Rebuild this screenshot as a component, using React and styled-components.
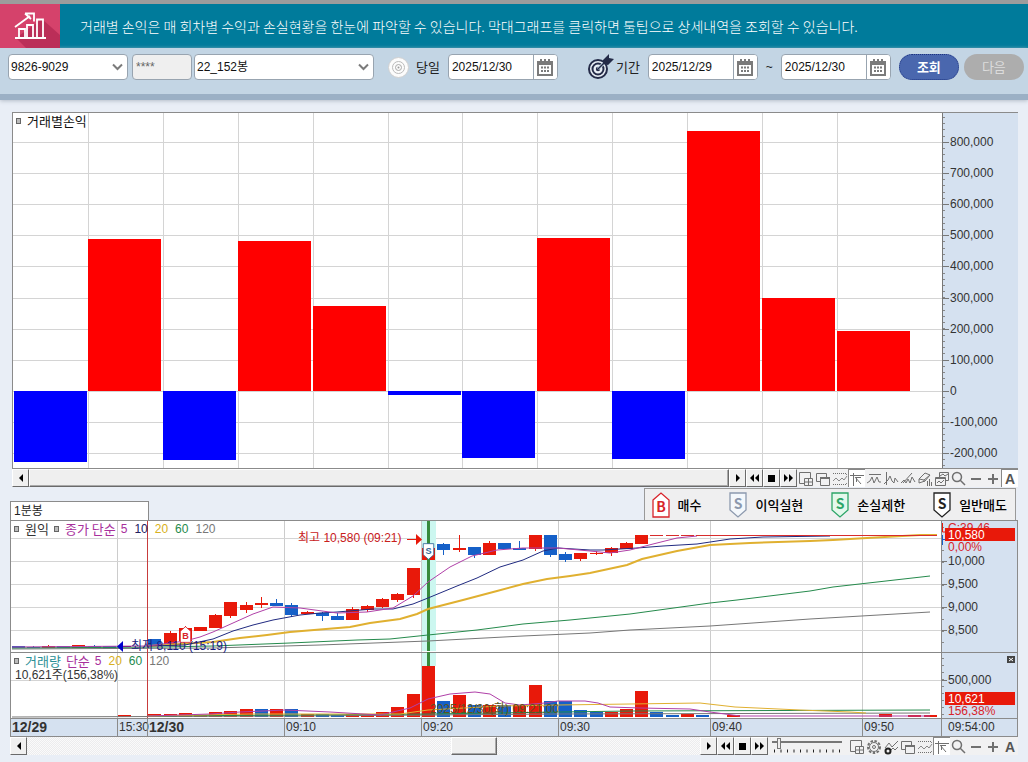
import styled, { createGlobalStyle, css } from "styled-components";

const GlobalStyle = createGlobalStyle`
  * {
    box-sizing: border-box;
  }

  body {
    margin: 0;
    background: #e9eef6;
    color: #222;
    font-family: "Liberation Sans", "Noto Sans CJK KR", sans-serif;
    font-size: 12px;
    line-height: 16px;
  }

  button,
  input,
  select {
    font: inherit;
    color: inherit;
  }
`;

const RED = "#e8190a";
const BLUE = "#1560c8";

/* ---------- header ---------- */

const Header = styled.header`
  display: flex;
  align-items: center;
  height: 48px;
  border-top: 4px solid #9c9c9c;
  background: #007b9b;
`;

const HeaderLogo = styled.svg`
  flex: none;
  width: 60px;
  height: 44px;
`;

const HeaderText = styled.p`
  margin: 0 0 0 20px;
  color: #fff;
  font-family: "Noto Sans CJK KR", sans-serif;
  font-size: 14px;
  font-weight: 300;
  white-space: nowrap;
`;

/* ---------- search bar ---------- */

const SearchBar = styled.form`
  display: flex;
  align-items: center;
  height: 52px;
  padding: 0 4px 8px 8px;
  border-bottom: 6px solid #9bb0c5;
  background: #c3d5e4;
  box-shadow: 0 1px 4px #b4bcc8;
`;

const Field = styled.div`
  position: relative;
  display: flex;
  flex: none;
  width: ${(props) => props.$width}px;
  height: 26px;
  margin-right: ${(props) => props.$gap || 0}px;
  overflow: hidden;
  border: 1px solid #98a4b0;
  border-radius: 4px;
  background: ${(props) => (props.$disabled ? "#efefef" : "#fff")};
`;

const FieldInput = styled.input`
  flex: 1;
  min-width: 0;
  padding: 0 3px;
  border: 0;
  outline: 0;
  background: transparent;
  color: ${(props) => (props.disabled ? "#666" : "#111")};
`;

const FieldSelect = styled.select`
  width: 100%;
  padding: 0 20px 0 2px;
  border: 0;
  outline: 0;
  appearance: none;
  background: transparent;
  color: #111;
`;

const Chevron = styled.svg`
  position: absolute;
  top: 8px;
  right: 4px;
  width: 11px;
  height: 8px;
  pointer-events: none;
`;

const CalendarButton = styled.button`
  display: flex;
  align-items: center;
  justify-content: center;
  width: 24px;
  padding: 0;
  border: 0;
  border-left: 1px solid #98a4b0;
  background: #fff;
`;

const PeriodOption = styled.label`
  display: flex;
  flex: none;
  align-items: center;
  gap: ${(props) => props.$gap}px;
  margin-right: 8px;
  margin-left: ${(props) => props.$left}px;
  font-family: "Noto Sans CJK KR", sans-serif;
  font-size: 13px;

  input {
    position: absolute;
    opacity: 0;
  }
`;

const Tilde = styled.span`
  flex: 1;
  min-width: 22px;
  max-width: 23px;
  text-align: center;
`;

const PillButton = styled.button`
  flex: none;
  width: 60px;
  height: 26px;
  margin-left: ${(props) => props.$left}px;
  padding: 0 0 1px;
  border: ${(props) => (props.disabled ? "0" : "1px dotted #1e3480")};
  border-radius: 13px;
  background: ${(props) => (props.disabled ? "#adadad" : "#4a67ae")};
  color: ${(props) => (props.disabled ? "#dcdcdc" : "#fff")};
  font-family: "Noto Sans CJK KR", sans-serif;
  font-size: 13px;
  font-weight: ${(props) => (props.disabled ? 400 : 700)};
`;

/* ---------- charts ---------- */

const Content = styled.main`
  padding: 12px 10px 8px;
`;

const ProfitPanel = styled.section`
  margin-left: 2px;
`;

const ProfitChart = styled.div`
  display: flex;
  height: 357px;
  border: 1px solid #8b8b8b;
  border-right: 0;
  background: #fff;
`;

const Plot = styled.div`
  position: relative;
  flex: 1;
  min-width: 0;
`;

const PlotDrawing = styled.svg`
  display: block;
  width: 100%;
  height: 100%;
`;

const Axis = styled.svg`
  display: block;
  flex: none;
  width: 76px;
  height: 100%;
  background: #d5e1f0;
  font-size: 12px;
`;

const Legend = styled.div`
  position: absolute;
  top: ${(props) => props.$top}px;
  left: 3px;
  display: flex;
  align-items: center;
  white-space: nowrap;
`;

const Square = styled.i`
  width: 5px;
  height: 6px;
  margin-right: 6px;
  border: 1px solid #666;
  background: #bbb;
`;

const LegendName = styled.span`
  margin-right: 5px;
  color: ${(props) => props.$color};
  font-family: "Noto Sans CJK KR", sans-serif;
  font-size: 13px;
`;

const LegendNumber = styled.span`
  margin-right: 7px;
  color: ${(props) => props.$color};
`;

const Note = styled.span`
  position: absolute;
  top: ${(props) => props.$top}px;
  left: ${(props) => props.$left}%;
  color: ${(props) => props.$color};
  white-space: nowrap;
`;

const PlotMark = styled.svg`
  position: absolute;
  top: ${(props) => props.$top}px;
  left: ${(props) => props.$left}%;
  overflow: visible;
`;

const MiddleRow = styled.div`
  display: flex;
  align-items: flex-end;
  justify-content: space-between;
  height: 33px;
  padding-right: 2px;
`;

const ChartTab = styled.div`
  width: 139px;
  height: 19px;
  padding: 1px 3px;
  border: 1px solid #8b8b8b;
  border-bottom: 0;
  background: #fff;
`;

const MarkLegend = styled.ul`
  display: flex;
  align-items: center;
  gap: 28px;
  height: 32px;
  margin: 0;
  padding: 0 8px 0 7px;
  border: 1px solid #999;
  border-bottom: 0;
  background: #efeff0;
  list-style: none;
`;

const MarkLegendItem = styled.li`
  display: flex;
  align-items: center;
  gap: 8px;
  color: #000;
  font-family: "Noto Sans CJK KR", sans-serif;
  font-size: 13px;
  font-weight: 500;
`;

const StockChart = styled.section`
  border: 1px solid #8b8b8b;
  background: #fff;
`;

const StockBody = styled.div`
  display: flex;
  height: 197px;
`;

const TimeAxis = styled.div`
  display: grid;
  grid-template-columns: 106fr 30fr 137fr 137fr 137fr 152fr 152fr 79fr 76px;
  height: 18px;
  border-top: 1px solid #8b8b8b;
  background: #d5e1f0;
  color: #333;
`;

const TimeCell = styled.span`
  min-width: 0;
  padding-left: ${(props) => (props.$last ? 6 : 1)}px;
  border-left: ${(props) => (props.$first ? "0" : "1px solid #8b8b8b")};
  white-space: nowrap;

  ${(props) =>
    props.$bold &&
    css`
      font-size: 14px;
      font-weight: 700;
    `}
`;

/* ---------- scroll rows ---------- */

const ScrollRow = styled.div`
  display: flex;
  height: 18px;
  overflow: hidden;
  background: #f1f1f2;
`;

const StepButton = styled.button`
  display: flex;
  flex: none;
  align-items: center;
  justify-content: center;
  width: 17px;
  height: 18px;
  padding: 0;
  border: 1px solid;
  border-color: #fff #6a6a6a #6a6a6a #fff;
  background: #f0f0f0;
`;

const Track = styled.div`
  display: flex;
  flex: 1;
  background: repeating-conic-gradient(#ececee 0% 25%, #fafafa 0% 50%) 0 0 / 2px 2px;
`;

const Thumb = styled.div`
  flex: ${(props) => (props.$width ? `0 0 ${props.$width}px` : "1")};
  border: 1px solid;
  border-color: #fff #6a6a6a #6a6a6a #fff;
  box-shadow: inset -1px -1px 0 #aaa;
  background: #efefef;
`;

const Spacer = styled.div`
  flex: ${(props) => props.$grow};
`;

const ToolButton = styled.button`
  flex: none;
  width: 17px;
  height: 18px;
  padding: 0;
  border: 0;
  border-left: 1px solid ${(props) => (props.$pressed ? "#888" : "transparent")};
  border-top: 1px solid ${(props) => (props.$pressed ? "#888" : "transparent")};
  background: ${(props) => (props.$pressed ? "#fff" : "transparent")};

  svg {
    display: block;
    width: 16px;
    height: 16px;
  }
`;

const ZoomBox = styled.div`
  flex: none;
  width: 80px;
  padding: 0 6px 0 4px;

  svg {
    display: block;
  }
`;

const ZoomSlider = styled.input`
  display: block;
  width: 70px;
  height: 12px;
  margin: 0;
  appearance: none;
  background: linear-gradient(#777, #777) 0 4px / 100% 2px no-repeat;

  &::-webkit-slider-thumb {
    width: 4px;
    height: 11px;
    border: 1px solid #777;
    appearance: none;
    background: #eee;
  }
`;

/* ---------- icons ---------- */

function GrowthLogo() {
  return (
    <HeaderLogo viewBox="0 0 60 44" aria-hidden="true">
      <rect width="60" height="44" fill="#d5426b" />
      <path d="M42 15 60 31V44H26L16 34Z" fill="#bb2e58" />
      <path
        d="M15 34H46M19 33V25H25V33M27 33V21H33V33M37 33V15.500H43V33M15 23 30 12M25 9.500H34V17.500M25 9.500 31 15"
        fill="none"
        stroke="#fff"
        strokeWidth="1.800"
      />
    </HeaderLogo>
  );
}

function CalendarIcon() {
  return (
    <svg width="16" height="17" viewBox="0 0 16 17" aria-hidden="true">
      <path d="M3 0H5V2H7V0H9V2H11V0H13V2H16V17H0V2H3Z" fill="#7b7b7b" />
      <path d="M2 6H14V15H2Z" fill="#fff" />
      <path d="M4 8.500H12.500M4 12H12.500" stroke="#7b7b7b" strokeWidth="2" strokeDasharray="2 1" />
    </svg>
  );
}

function CircleIcon() {
  return (
    <svg width="21" height="21" viewBox="0 0 21 21" aria-hidden="true">
      <circle cx="10.500" cy="10.500" r="10" fill="#fcfcfc" stroke="#d0d0d0" />
      <circle cx="10.500" cy="10.500" r="6" fill="none" stroke="#bbb" />
      <circle cx="10.500" cy="10.500" r="3" fill="none" stroke="#aaa" />
      <circle cx="10.500" cy="10.500" r="1" fill="#999" />
    </svg>
  );
}

function TargetIcon() {
  return (
    <svg width="26" height="28" viewBox="0 0 26 28" aria-hidden="true">
      <circle cx="10" cy="16" r="9" fill="#e8eef5" stroke="#242b48" strokeWidth="2" />
      <circle cx="10" cy="16" r="5.500" fill="none" stroke="#242b48" strokeWidth="2" />
      <circle cx="10" cy="16" r="2.200" fill="#242b48" />
      <path d="M10 16 19 7" stroke="#c3d5e4" strokeWidth="3" />
      <path d="M10 16 20 6" stroke="#242b48" strokeWidth="1.500" />
      <path d="M15 7 21 1V5L26 6 20 12 15 11Z" fill="#242b48" />
    </svg>
  );
}

function Badge({ letter, color, fill = "#fff", up, width = 18, height = 26, ...rest }) {
  return (
    <svg width={width} height={height} viewBox="0 0 18 26" aria-hidden="true" {...rest}>
      <path
        d={up ? "M1 8 9 1 17 8V25H1Z" : "M1 1H17V18L9 25 1 18Z"}
        fill={fill}
        stroke={color}
        strokeWidth="1.300"
      />
      <text x="9" y={up ? 20 : 17} fill={color} fontSize="14" fontWeight="700" textAnchor="middle">
        {letter}
      </text>
    </svg>
  );
}

const stepPaths = {
  left: "M8 1V9L4 5Z",
  right: "M4 1V9L8 5Z",
  rewind: "M5 1V9L1 5ZM10 1V9L6 5Z",
  stop: "M2 2H9V9H2Z",
  forward: "M1 1V9L5 5ZM6 1V9L10 5Z",
};

const stepLabels = { left: "왼쪽", right: "오른쪽", rewind: "뒤로", stop: "정지", forward: "앞으로" };

function Step({ name }) {
  return (
    <StepButton type="button" aria-label={stepLabels[name]}>
      <svg width="11" height="11" viewBox="0 0 11 11">
        <path d={stepPaths[name]} fill="#000" />
      </svg>
    </StepButton>
  );
}

const toolDrawings = {
  add: <path d="M7 12.500H1.500V1.500H12.500V7M6.500 7.500H14.500V14.500H6.500ZM10.500 7.500V14.500M6.500 11H14.500" />,
  windows: (
    <>
      <path d="M1.500 2.500H11.500V10.500H1.500Z" />
      <path d="M5.500 6.500H14.500V14.500H5.500Z" fill="#f1f1f2" />
      <path d="M5 7H15" strokeWidth="2" />
    </>
  ),
  band: (
    <>
      <path d="M1 2.500H15M1 13.500H15" strokeDasharray="1 1" />
      <path d="M1 10 4 7 7 10 10 7 12 9 15 5M13 2 15 4M13 14 15 12" strokeWidth=".8" />
    </>
  ),
  cursor: <path d="M1 4.500H15M4.500 2V15M6 6 12 13M7 6.500H12M7.500 6.500V11" />,
  peak: <path d="M3 3.500H15M1 12 4 10 6 6 8 12 11 6 13 11 15 11" />,
  wave: <path d="M3.500 1V14M1 13 5 9 7 5 9 10 11 12 12 7 15 11" />,
  slope: <path d="M1 12 4 9 6 12 8 8 10 12 12 6 15 11M3 12 12 2" />,
  eraser: <path d="M2 8 8 2 13 4 8 10 2 12ZM2 8 7 9 13 4M7 9V11M10.500 10V15M12.500 8V15M14.500 11V15" />,
  charts: (
    <>
      <path d="M5.500 1.500H14.500V9.500H5.500ZM6 5 9 3 11 5 14 3" />
      <path d="M1.500 6.500H11.500V14.500H1.500Z" fill="#f1f1f2" />
      <path d="M1 7.500H12M3 12 5 10 7 12 10 9" />
    </>
  ),
  search: <path d="M10.500 6A4.500 4.500 0 1 1 1.500 6 4.500 4.500 0 1 1 10.500 6M9.500 9.500 14 14" strokeWidth="1.500" />,
  minus: <path d="M3 8H13" strokeWidth="2" />,
  plus: <path d="M3 8H13M8 3V13" strokeWidth="2" />,
  gear: (
    <>
      <circle cx="8" cy="8" r="6" strokeWidth="2" strokeDasharray="2.500 1.500" />
      <circle cx="8" cy="8" r="4.500" />
      <circle cx="8" cy="8" r="1.500" />
    </>
  ),
  indicator: (
    <>
      <path d="M2 9 6 4 9 8 15 2M7 12 10 9 12 11 15 8" />
      <circle cx="5" cy="12" r="2.500" stroke="#222" strokeWidth="2" />
    </>
  ),
  letter: (
    <text x="8" y="13" fill="#555" stroke="none" fontSize="14" fontWeight="700" textAnchor="middle">
      A
    </text>
  ),
};

const toolLabels = {
  add: "추가",
  windows: "창",
  band: "구간",
  cursor: "커서",
  peak: "고점",
  wave: "파동",
  slope: "추세선",
  eraser: "지우기",
  charts: "차트",
  search: "돋보기",
  minus: "축소",
  plus: "확대",
  gear: "설정",
  indicator: "지표",
  letter: "글자",
};

function Tool({ name, pressed }) {
  return (
    <ToolButton type="button" aria-label={toolLabels[name]} $pressed={pressed}>
      <svg viewBox="0 0 16 16" fill="none" stroke="#707070">
        {toolDrawings[name]}
      </svg>
    </ToolButton>
  );
}

/* ---------- data ---------- */

// x, top, bottom
const profitBars = [
  [14, 391, 462],
  [88, 239, 391],
  [163, 391, 460],
  [238, 241, 391],
  [313, 306, 391],
  [388, 391, 395],
  [462, 391, 458],
  [537, 238, 391],
  [612, 391, 459],
  [687, 131, 391],
  [762, 298, 391],
  [837, 331, 391],
];

const profitLabels = [
  "800,000",
  "700,000",
  "600,000",
  "500,000",
  "400,000",
  "300,000",
  "200,000",
  "100,000",
  "0",
  "-100,000",
  "-200,000",
];

// x, open/close top, bottom, high, low, rising
const candles = [
  [12, 646, 648, 646, 648, 0],
  [27, 647, 648, 646, 648, 0],
  [42, 646, 648, 645, 648, 1],
  [57, 646, 648, 646, 648, 0],
  [72, 645, 648, 645, 648, 1],
  [88, 646, 648, 645, 648, 0],
  [103, 646, 649, 646, 649, 0],
  [148, 639, 645, 639, 646, 0],
  [164, 633, 646, 631, 646, 1],
  [179, 628, 641, 626, 641, 1],
  [194, 627, 631, 627, 631, 1],
  [209, 615, 628, 614, 628, 1],
  [224, 602, 616, 602, 618, 1],
  [240, 605, 610, 602, 613, 1],
  [255, 603, 605, 597, 608, 1],
  [270, 603, 606, 599, 606, 0],
  [285, 605, 615, 603, 617, 0],
  [301, 612, 614, 611, 614, 1],
  [316, 613, 616, 612, 621, 0],
  [331, 616, 620, 613, 620, 0],
  [346, 609, 620, 607, 620, 1],
  [361, 606, 610, 605, 612, 1],
  [376, 599, 607, 598, 608, 1],
  [391, 594, 600, 593, 602, 1],
  [407, 568, 595, 568, 598, 1],
  [422, 548, 560, 548, 567, 1],
  [437, 544, 550, 543, 555, 0],
  [453, 548, 550, 535, 552, 1],
  [468, 547, 555, 547, 558, 0],
  [483, 543, 555, 541, 555, 1],
  [498, 543, 549, 543, 549, 0],
  [513, 548, 550, 541, 550, 0],
  [529, 535, 549, 535, 551, 1],
  [544, 535, 555, 535, 557, 0],
  [559, 554, 560, 552, 562, 0],
  [574, 553, 559, 553, 561, 1],
  [590, 553, 554, 551, 555, 1],
  [605, 548, 553, 547, 556, 1],
  [620, 543, 549, 542, 549, 1],
  [635, 535, 544, 535, 544, 1],
];

// x, top, rising
const volumes = [
  [118, 715, 1],
  [148, 714, 1],
  [164, 714, 1],
  [179, 713, 1],
  [194, 715, 1],
  [209, 712, 1],
  [224, 711, 1],
  [240, 709, 1],
  [255, 709, 0],
  [270, 709, 1],
  [285, 709, 0],
  [301, 714, 1],
  [316, 714, 0],
  [331, 715, 0],
  [346, 714, 1],
  [361, 714, 1],
  [376, 712, 1],
  [391, 707, 1],
  [407, 694, 1],
  [422, 666, 1],
  [437, 701, 0],
  [453, 695, 1],
  [468, 705, 0],
  [483, 705, 1],
  [498, 705, 0],
  [513, 705, 1],
  [529, 685, 1],
  [544, 701, 0],
  [559, 701, 0],
  [574, 710, 0],
  [590, 712, 0],
  [605, 712, 1],
  [620, 709, 1],
  [635, 691, 1],
  [650, 712, 0],
  [666, 715, 0],
  [681, 714, 1],
  [696, 715, 0],
  [727, 715, 1],
  [879, 714, 1],
  [908, 715, 1],
  [924, 715, 1],
];

const lines = [
  { color: "#777", points: "12,649 213,648 320,645 428,641 523,636 590,633 630,630 710,626 810,619 930,612" },
  {
    color: "#258a4c",
    points:
      "12,648 160,647 213,646 290,643 357,640 390,639 428,635 477,630 523,624 570,620 630,614 710,603 737,600 810,591 833,587 930,576",
  },
  {
    color: "#e0b030",
    width: 2,
    points:
      "148,646 213,642 240,638 267,635 290,632 350,627 370,623 400,619 417,614 428,609 463,600 497,591 523,584 547,579 570,576 590,573 627,565 642,559 677,551 710,545 750,543 810,541 833,540 867,538 920,535 937,535",
  },
  {
    color: "#202a80",
    points:
      "148,646 185,645 213,639 233,631 253,625 273,620 300,615 320,613 337,612 373,609 393,609 413,604 428,598 457,586 477,578 500,567 523,560 543,551 558,548 590,550 603,550 637,548 663,546 697,544 730,539 763,537 830,536",
  },
  {
    color: "#b040a8",
    points:
      "12,647 148,646 185,641 200,637 213,632 233,623 253,614 273,607 300,608 337,613 367,612 393,608 413,596 428,582 450,567 472,556 497,550 523,548 558,548 590,551 610,553 630,550 653,544 677,538 697,536",
  },
  { color: "#777", points: "12,717 300,716 558,714 930,713" },
  { color: "#258a4c", points: "148,716 300,715 428,714 560,712 630,711 930,710" },
  {
    color: "#e0b030",
    points:
      "148,716 250,714 400,714 428,710 500,706 558,705 630,704 700,703 735,707 800,710 850,712 866,713",
  },
  {
    color: "#b040a8",
    points:
      "148,716 210,714 240,712 285,710 330,712 380,715 410,708 428,699 450,694 475,692 490,694 505,703 520,705 545,703 558,701 585,701 598,703 610,707 640,708 690,709 710,712 740,716 930,716",
  },
];

// x, width of the flat candles at the day's limit
const flatCandles = [
  [650, 13],
  [666, 13],
  [681, 13],
  [696, 241],
];

const profitColumns = [88, 163, 238, 313, 388, 462, 537, 612, 687, 762, 837];
const timeColumns = [117, 284, 421, 558, 710, 862];
const priceRows = [538, 561, 584, 607, 630, 680];
const priceLabels = [
  ["10,000", 561],
  ["9,500", 584],
  ["9,000", 607],
  ["8,500", 630],
  ["500,000", 680],
];

const marks = [
  { name: "매수", letter: "B", color: "#d8232a", up: true },
  { name: "이익실현", letter: "S", color: "#8c99ae", fill: "#f4f8fc" },
  { name: "손실제한", letter: "S", color: "#2ca567", fill: "#e4f8ec" },
  { name: "일반매도", letter: "S", color: "#222" },
];

// horizontal place of a note in the plot, in percent of its width
const place = (x) => ((x - 11) / 930) * 100;

/* ---------- parts ---------- */

function SelectField({ label, value, width, gap }) {
  return (
    <Field $width={width} $gap={gap}>
      <FieldSelect aria-label={label} defaultValue={value}>
        <option>{value}</option>
      </FieldSelect>
      <Chevron viewBox="0 0 11 8" aria-hidden="true">
        <path d="M1 1.500 5.500 6 10 1.500" fill="none" stroke="#7b7b7b" strokeWidth="2" />
      </Chevron>
    </Field>
  );
}

function DateField({ label, value }) {
  return (
    <Field $width={110}>
      <FieldInput aria-label={label} defaultValue={value} />
      <CalendarButton type="button" aria-label={`${label} 달력`}>
        <CalendarIcon />
      </CalendarButton>
    </Field>
  );
}

function ProfitAxis() {
  return (
    <Axis viewBox="942 113 76 355">
      <path d="M942.500 113V468" stroke="#777" />
      {Array.from({ length: 57 }, (_, i) => (
        <path key={i} d={`M943 ${117 + Math.round(i * 6.22)}.500h2`} stroke="#888" />
      ))}
      {profitLabels.map((label, i) => {
        const y = 142 + Math.round(i * 31.1);
        return (
          <g key={label}>
            <path d={`M943 ${y}.500h6`} stroke="#777" />
            <text x="950" y={y + 4} fill="#333">
              {label}
            </text>
          </g>
        );
      })}
    </Axis>
  );
}

function ProfitPlot() {
  return (
    <Plot>
      <PlotDrawing viewBox="13 113 929 355" preserveAspectRatio="none" shapeRendering="crispEdges">
        {profitColumns.map((x) => (
          <path key={x} d={`M${x}.500 113V468`} stroke="#d4d4d4" />
        ))}
        {profitLabels.map((label, i) => (
          <path key={label} d={`M13 ${142 + Math.round(i * 31.1)}.500H942`} stroke="#d4d4d4" />
        ))}
        {profitBars.map(([x, top, bottom]) => (
          <rect
            key={x}
            x={x}
            y={top}
            width="73"
            height={bottom - top}
            fill={top === 391 ? "#00f" : "#f00"}
          />
        ))}
      </PlotDrawing>
      <Legend $top={0}>
        <Square />
        <LegendName $color="#111">거래별손익</LegendName>
      </Legend>
    </Plot>
  );
}

function StockPlot() {
  return (
    <Plot>
      <PlotDrawing viewBox="11 521 930 197" preserveAspectRatio="none">
        <g shapeRendering="crispEdges">
          {timeColumns.map((x) => (
            <path key={x} d={`M${x}.500 521V718`} stroke="#ccc" />
          ))}
          {priceRows.map((y) => (
            <path key={y} d={`M11 ${y}.500H941`} stroke="#d4d4d4" />
          ))}
          <rect x="422" y="521" width="14" height="145" fill="#ccf7f0" />
          <path d="M11 652.500H941" stroke="#888" />
          <rect x="147" y="521" width="1" height="197" fill="#c83c3c" />
          {candles.map(([x, top, bottom, high, low, rising]) => (
            <g key={x} fill={rising ? RED : BLUE}>
              <rect x={x} y={top} width="13" height={bottom - top} />
              <rect x={x + 6} y={high} width="1" height={low - high} />
            </g>
          ))}
          {volumes.map(([x, top, rising]) => (
            <rect key={x} x={x} y={top} width="13" height={717 - top} fill={rising ? RED : BLUE} />
          ))}
          <rect x="427" y="521" width="3" height="145" fill="#378a3c" />
          <path d="M422 651.500H436" stroke="#fff" />
        </g>
        {lines.map((line, i) => (
          <polyline
            key={i}
            points={line.points}
            fill="none"
            stroke={line.color}
            strokeWidth={line.width || 1}
          />
        ))}
        {flatCandles.map(([x, width]) => (
          <rect key={x} x={x} y="535" width={width} height="1" fill="#d82c2c" />
        ))}
      </PlotDrawing>
      <Legend $top={0}>
        <Square />
        <LegendName $color="#333">원익</LegendName>
        <Square />
        <LegendName $color="#a8309c">종가 단순</LegendName>
        <LegendNumber $color="#a8309c">5</LegendNumber>
        <LegendNumber $color="#202060">10</LegendNumber>
        <LegendNumber $color="#d8b020">20</LegendNumber>
        <LegendNumber $color="#258a4c">60</LegendNumber>
        <LegendNumber $color="#777">120</LegendNumber>
      </Legend>
      <Legend $top={132}>
        <Square />
        <LegendName $color="#2a8f96">거래량</LegendName>
        <LegendName $color="#a8309c">단순</LegendName>
        <LegendNumber $color="#a8309c">5</LegendNumber>
        <LegendNumber $color="#d8b020">20</LegendNumber>
        <LegendNumber $color="#258a4c">60</LegendNumber>
        <LegendNumber $color="#777">120</LegendNumber>
      </Legend>
      <Note $top={146} $left={place(15)} $color="#333">
        10,621주(156,38%)
      </Note>
      <Note $top={9} $left={place(298)} $color="#c8201c">
        최고 10,580 (09:21)
      </Note>
      <PlotMark $top={13} $left={place(407)} width="16" height="11" viewBox="0 0 16 11">
        <rect y="5" width="10" height="1" fill={RED} />
        <path d="M9 0V11L15 5.500Z" fill={RED} />
      </PlotMark>
      <Note $top={117} $left={place(131)} $color="#1a1a80">
        최저 8,110 (15:19)
      </Note>
      <PlotMark $top={120} $left={place(117)} width="15" height="11" viewBox="0 0 15 11">
        <rect x="5" y="5" width="9" height="1" fill="#80208a" />
        <path d="M6 0V11L0 5.500Z" fill="#00c" />
      </PlotMark>
      <PlotMark as={Badge} $top={105} $left={place(179)} letter="B" color="#d8232a" up width={13} height={17} />
      <PlotMark as={Badge} $top={22} $left={place(422)} letter="S" color="#34699a" width={13} height={17} />
      <Note $top={180} $left={place(430)} $color="#5c5420">
        2025/12/30(화) 09:21:00
      </Note>
    </Plot>
  );
}

function StockAxis() {
  return (
    <Axis viewBox="941 521 76 197">
      <path d="M941.500 521V718M941 652.500H1017" stroke="#888" />
      {Array.from({ length: 11 }, (_, i) => (
        <path key={i} d={`M942 ${527 + Math.round(i * 11.5)}.500h2`} stroke="#888" />
      ))}
      {Array.from({ length: 9 }, (_, i) => (
        <path key={i} d={`M942 ${658 + i * 7}.500h2`} stroke="#888" />
      ))}
      {priceLabels.map(([label, y]) => (
        <g key={label}>
          <path d={`M942 ${y}.500h5`} stroke="#777" />
          <text x="948" y={y + 4} fill="#333">
            {label}
          </text>
        </g>
      ))}
      <path d="M942.500 523V532H945" fill="none" stroke={RED} />
      <path d="M942.500 535V545M942 539.500H946" stroke={BLUE} />
      <text x="948" y="532" fill="#d8232a">
        C:39,46
      </text>
      <rect x="945" y="528" width="70" height="13" fill={RED} />
      <text x="948" y="539" fill="#fff">
        10,580
      </text>
      <text x="948" y="551" fill="#d8232a">
        0,00%
      </text>
      <rect x="945" y="692" width="70" height="13" fill={RED} />
      <text x="948" y="703" fill="#fff">
        10,621
      </text>
      <text x="948" y="715" fill="#d8232a">
        156,38%
      </text>
      <rect x="1007" y="656" width="8" height="7" fill="#444" />
      <path d="M1009 658 1013 661M1013 658 1009 661" stroke="#fff" />
    </Axis>
  );
}

function App() {
  return (
    <>
      <GlobalStyle />
      <Header>
        <GrowthLogo />
        <HeaderText>
          거래별 손익은 매 회차별 수익과 손실현황을 한눈에 파악할 수 있습니다. 막대그래프를 클릭하면 툴팁으로
          상세내역을 조회할 수 있습니다.
        </HeaderText>
      </Header>
      <SearchBar onSubmit={(e) => e.preventDefault()}>
        <SelectField label="계좌번호" value="9826-9029" width={120} gap={4} />
        <Field $width={60} $gap={2} $disabled>
          <FieldInput aria-label="비밀번호" defaultValue="****" disabled />
        </Field>
        <SelectField label="계좌명" value="22_152봉" width={180} />
        <PeriodOption $left={14} $gap={7}>
          <input type="radio" name="period" />
          <CircleIcon />
          당일
        </PeriodOption>
        <DateField label="당일" value="2025/12/30" />
        <PeriodOption $left={30} $gap={2}>
          <input type="radio" name="period" defaultChecked />
          <TargetIcon />
          기간
        </PeriodOption>
        <DateField label="시작일" value="2025/12/29" />
        <Tilde>~</Tilde>
        <DateField label="종료일" value="2025/12/30" />
        <PillButton type="submit" $left={8}>
          조회
        </PillButton>
        <PillButton type="button" $left={5} disabled>
          다음
        </PillButton>
      </SearchBar>
      <Content>
        <ProfitPanel>
          <ProfitChart>
            <ProfitPlot />
            <ProfitAxis />
          </ProfitChart>
          <ScrollRow>
            <Step name="left" />
            <Track>
              <Thumb />
            </Track>
            <Step name="right" />
            <Step name="rewind" />
            <Step name="stop" />
            <Step name="forward" />
            <Tool name="add" />
            <Tool name="windows" />
            <Tool name="band" />
            <Tool name="cursor" pressed />
            <Tool name="peak" />
            <Tool name="wave" />
            <Tool name="slope" />
            <Tool name="eraser" />
            <Tool name="charts" />
            <Tool name="search" />
            <Tool name="minus" />
            <Tool name="plus" />
            <Tool name="letter" pressed />
          </ScrollRow>
        </ProfitPanel>
        <MiddleRow>
          <ChartTab>1분봉</ChartTab>
          <MarkLegend>
            {marks.map(({ name, ...mark }) => (
              <MarkLegendItem key={name}>
                <Badge {...mark} />
                {name}
              </MarkLegendItem>
            ))}
          </MarkLegend>
        </MiddleRow>
        <StockChart>
          <StockBody>
            <StockPlot />
            <StockAxis />
          </StockBody>
          <TimeAxis>
            <TimeCell $first $bold>
              12/29
            </TimeCell>
            <TimeCell>15:30</TimeCell>
            <TimeCell $bold>12/30</TimeCell>
            <TimeCell>09:10</TimeCell>
            <TimeCell>09:20</TimeCell>
            <TimeCell>09:30</TimeCell>
            <TimeCell>09:40</TimeCell>
            <TimeCell>09:50</TimeCell>
            <TimeCell $last>09:54:00</TimeCell>
          </TimeAxis>
        </StockChart>
        <ScrollRow>
          <Step name="left" />
          <Track>
            <Spacer $grow={425} />
            <Thumb $width={46} />
            <Spacer $grow={203} />
          </Track>
          <Step name="right" />
          <Step name="rewind" />
          <Step name="stop" />
          <Step name="forward" />
          <ZoomBox>
            <ZoomSlider type="range" aria-label="확대 비율" min="0" max="100" defaultValue="7" />
            <svg width="70" height="4" aria-hidden="true">
              <path d="M2 2H70" stroke="#222" strokeWidth="3" strokeDasharray="1 5.500" />
            </svg>
          </ZoomBox>
          <Tool name="add" />
          <Tool name="gear" />
          <Tool name="indicator" />
          <Tool name="windows" />
          <Tool name="band" />
          <Tool name="cursor" pressed />
          <Tool name="search" />
          <Tool name="minus" />
          <Tool name="plus" />
          <Tool name="letter" />
        </ScrollRow>
      </Content>
    </>
  );
}

export default App;
